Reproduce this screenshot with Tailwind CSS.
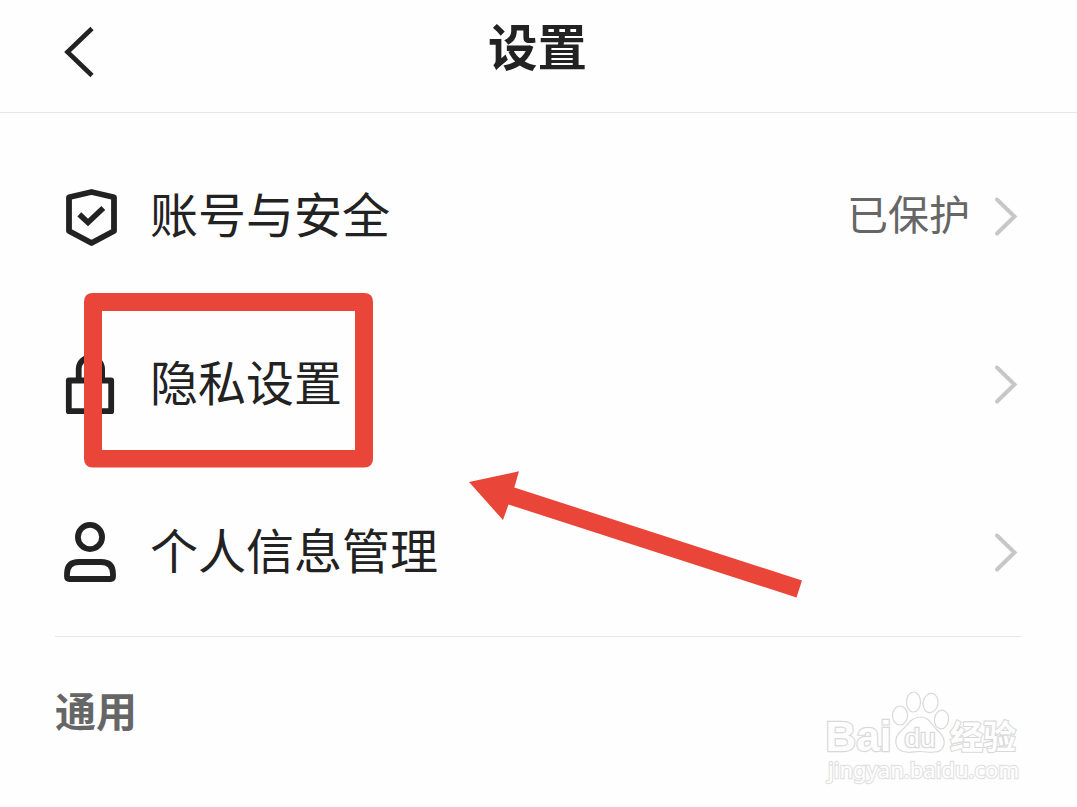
<!DOCTYPE html>
<html lang="zh-CN">
<head>
<meta charset="utf-8">
<title>设置</title>
<script src="https://cdn.jsdelivr.net/npm/@tailwindcss/browser@4"></script>
</head>
<body class="bg-[#fefefe] text-[#222] font-['Noto_Sans_CJK_SC',sans-serif]">
<div class="relative w-[1077px] h-[807px] overflow-hidden flex flex-col">
  <header class="h-[113px] shrink-0 border-b border-[#e6e6e6] grid grid-cols-[199px_1fr_201px]">
    <svg class="ml-[55px] mt-[20px] w-[48px] h-[64px]" viewBox="0 0 48 64" fill="none" stroke="#222" stroke-width="4.6"><path d="M37 8.500 12.500 32 37 55.500"/></svg>
    <h1 class="text-center text-[49.5px] leading-[90px] font-bold">设置</h1>
  </header>
  <main class="px-[55px] pt-5 flex flex-col">
    <div class="h-[168px] flex items-center">
      <svg class="w-[72px] h-[72px] shrink-0" viewBox="0 0 72 72" fill="none" stroke="#222" stroke-width="5.8" stroke-linejoin="round"><path d="M36.500 11 59 16.300V50L36.500 62 14 50V16.300z"/><path d="M24.300 33.400 33 41.500 48.300 27" stroke-width="5.600" stroke-linejoin="miter"/></svg>
      <span class="ml-[23px] mb-[10px] text-[48px] leading-[72px]">账号与安全</span>
      <span class="ml-auto mb-[10px] text-[41px] leading-[60px] text-[#666]">已保护</span>
      <svg class="ml-[21px] mr-[1px] mb-[2px] w-[30px] h-[44px]" viewBox="0 0 30 44" fill="none" stroke="#c7c7c7" stroke-width="4" stroke-linecap="round"><path d="M6 5.500 23.500 22.500 6 39.500"/></svg>
    </div>
    <div class="h-[168px] flex items-center">
      <svg class="w-[72px] h-[72px] shrink-0" viewBox="0 0 72 72" fill="none" stroke="#222" stroke-width="5.8" stroke-linejoin="round"><path d="M13.800 31.500H56.200V62.200H13.800z"/><path d="M23.700 31V20a11.700 11.700 0 0 1 23.400 0V31"/></svg>
      <span class="ml-[23px] mb-[10px] text-[48px] leading-[72px]">隐私设置</span>
      <svg class="ml-auto mr-[1px] mb-[2px] w-[30px] h-[44px]" viewBox="0 0 30 44" fill="none" stroke="#c7c7c7" stroke-width="4" stroke-linecap="round"><path d="M6 5.500 23.500 22.500 6 39.500"/></svg>
    </div>
    <div class="h-[168px] flex items-center">
      <svg class="w-[72px] h-[72px] shrink-0" viewBox="0 0 72 72" fill="none" stroke="#222" stroke-width="5.800"><circle cx="35" cy="20" r="12.100"/><path d="M24 45H46Q58 45 58 57V59.500Q58 62 55.500 62H14.500Q12 62 12 59.500V57Q12 45 24 45z"/></svg>
      <span class="ml-[23px] mb-[10px] text-[48px] leading-[72px]">个人信息管理</span>
      <svg class="ml-auto mr-[1px] mb-[2px] w-[30px] h-[44px]" viewBox="0 0 30 44" fill="none" stroke="#c7c7c7" stroke-width="4" stroke-linecap="round"><path d="M6 5.500 23.500 22.500 6 39.500"/></svg>
    </div>
    <div class="-mt-px mr-px h-px bg-[#e6e6e6]"></div>
    <h2 class="mt-[42px] text-[41px] leading-[60px] font-bold text-[#666]">通用</h2>
  </main>

  <!-- annotation overlay -->
  <div class="absolute left-[84px] top-[293px] w-[290px] h-[175px]">
    <svg class="w-full h-full" viewBox="0 0 290 175" fill="#e94538"><path fill-rule="evenodd" d="M9 0H280Q289 0 289 9V165.500Q289 174.500 280 174.500H9Q0 174.500 0 165.500V9Q0 0 9 0zM18 18V157H271V18z"/></svg>
  </div>
  <svg class="absolute left-[460px] top-[460px] w-[350px] h-[145px]" viewBox="460 460 350 145" fill="#e94538"><path d="M469 482 519 471.300 514.300 487.500 802 580.500 796.500 597.500 508.500 504.500 503 520z"/></svg>

  <!-- watermark -->
  <svg class="absolute left-[815px] top-[685px] w-[215px] h-[105px]" viewBox="815 685 215 105" fill="#fefefe" stroke="#d9d9d9" stroke-width="1.200" font-family="'Liberation Sans',sans-serif">
    <text x="825.500" y="750.500" font-size="42" font-weight="bold" textLength="66" lengthAdjust="spacingAndGlyphs" stroke-width="2.400" paint-order="stroke">Bai</text>
    <ellipse cx="900" cy="715.500" rx="7.500" ry="9.500"/><ellipse cx="913.500" cy="702" rx="7" ry="10"/><ellipse cx="930.500" cy="703" rx="7.500" ry="9.700" transform="rotate(10 930.500 703)"/><ellipse cx="941.500" cy="719.500" rx="7" ry="9.500" transform="rotate(8 941.500 719.500)"/>
    <path d="M920.500 717C930 717 932 726 939 732C947 739 946 752 934 752C929 753 926 751.500 920 751.500C915 751.500 911 753 906 752C894 751 893 738 901 731C908 725 911 717 920.500 717z"/>
    <text x="904.500" y="746.500" font-size="25" textLength="31" lengthAdjust="spacingAndGlyphs" stroke-width="2.400" paint-order="stroke">du</text>
    <text x="950" y="749" font-size="33" font-weight="bold" textLength="66" lengthAdjust="spacingAndGlyphs" font-family="'Noto Sans CJK SC',sans-serif" stroke-width="2.200" paint-order="stroke">经验</text>
    <text x="828" y="777.500" font-size="22" textLength="191" lengthAdjust="spacingAndGlyphs" stroke="#e2e2e2" stroke-width="2.400" paint-order="stroke" font-family="'Noto Sans',sans-serif">jingyan.baidu.com</text>
  </svg>
</div>
</body>
</html>
